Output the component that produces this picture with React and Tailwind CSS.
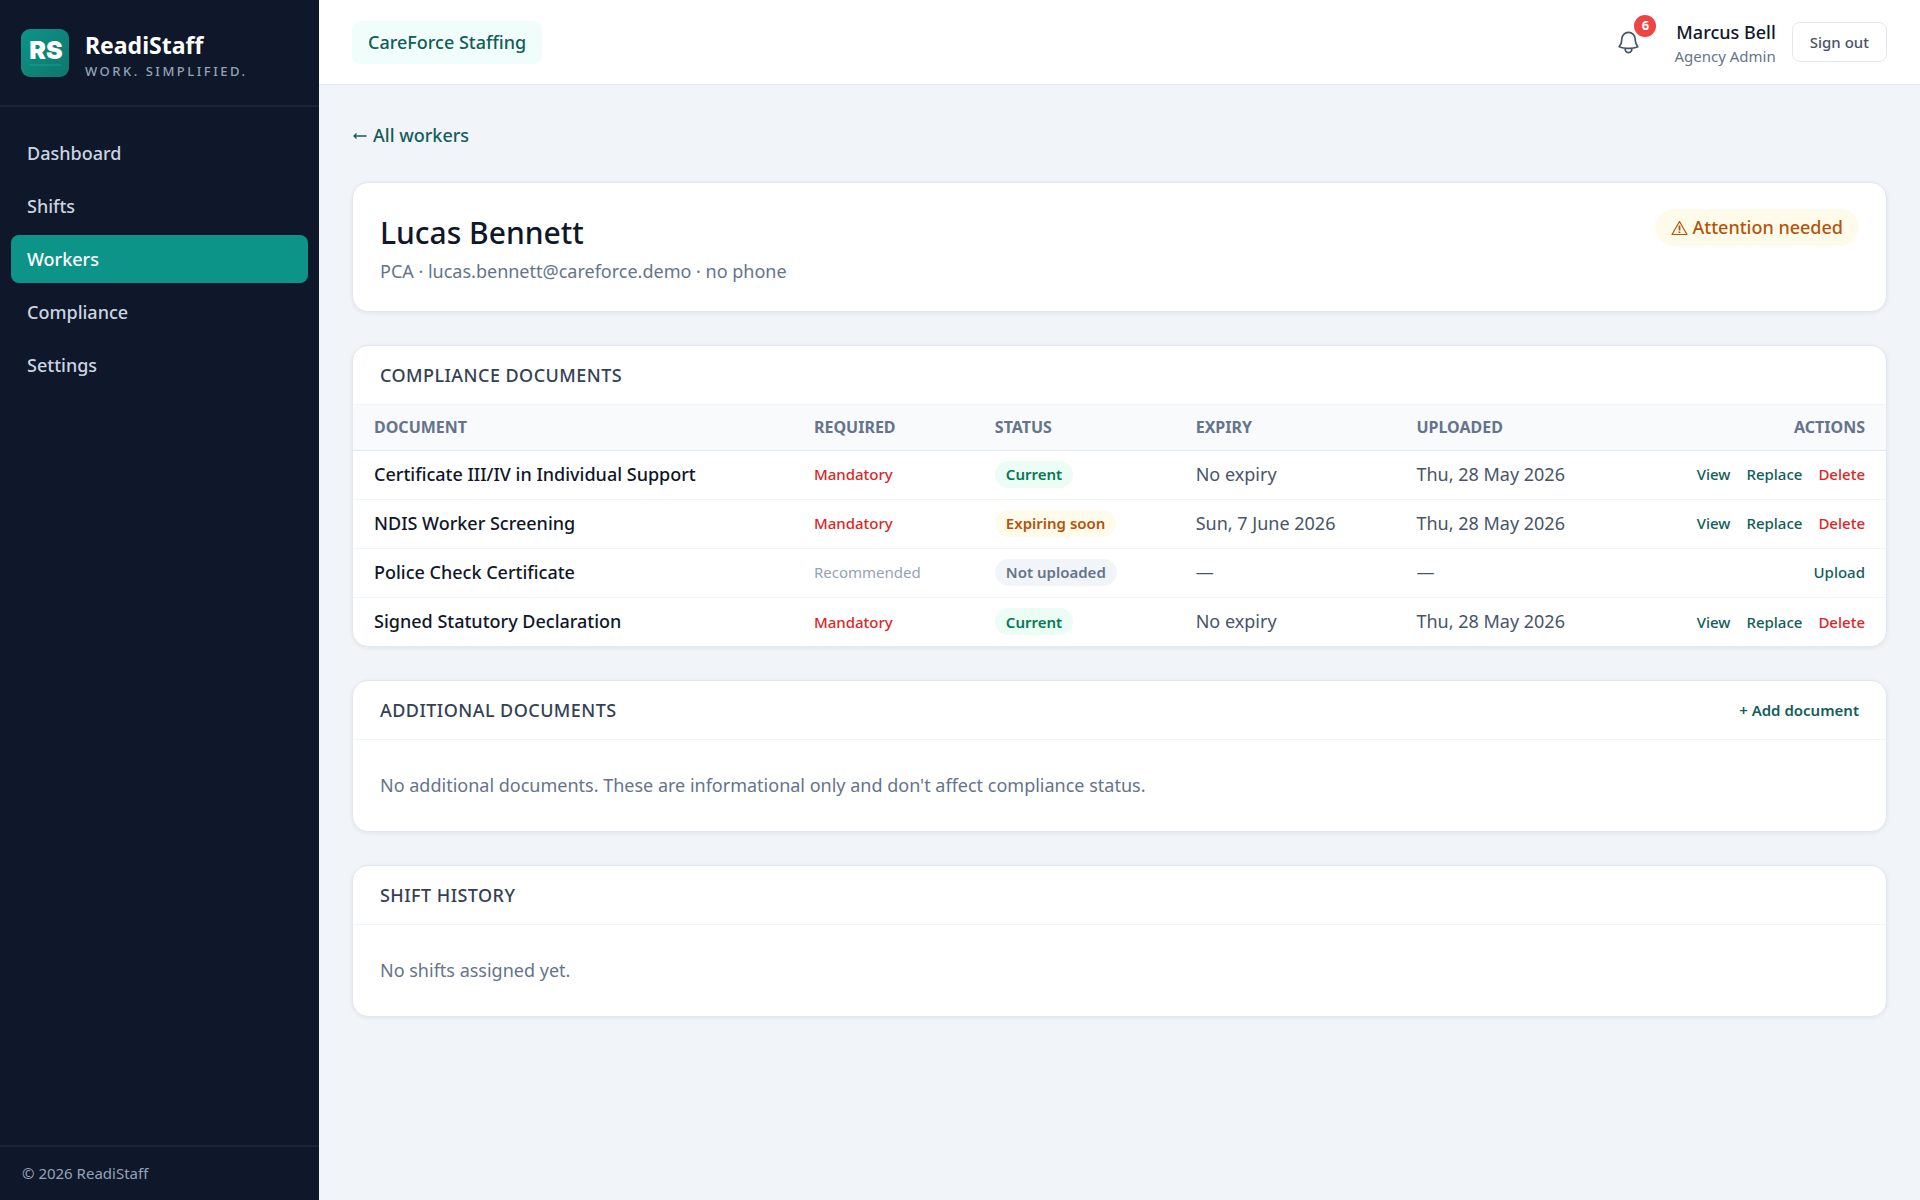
const NAV = ["Dashboard", "Shifts", "Workers", "Compliance", "Settings"];

const DOCS = [
  { name: "Certificate III/IV in Individual Support", mandatory: true, status: "Current", expiry: "No expiry", uploaded: "Thu, 28 May 2026" },
  { name: "NDIS Worker Screening", mandatory: true, status: "Expiring soon", expiry: "Sun, 7 June 2026", uploaded: "Thu, 28 May 2026" },
  { name: "Police Check Certificate", mandatory: false, status: "Not uploaded", expiry: "—", uploaded: "—" },
  { name: "Signed Statutory Declaration", mandatory: true, status: "Current", expiry: "No expiry", uploaded: "Thu, 28 May 2026" },
];

const STATUS_STYLE = {
  Current: "bg-[#ecfdf5] text-[#047857]",
  "Expiring soon": "bg-[#fffbeb] text-[#b45309]",
  "Not uploaded": "bg-[#f1f5f9] text-[#64748b]",
};

function Card({ children }) {
  return (
    <section className="overflow-hidden rounded-2xl border border-[#e2e8f0] bg-white shadow-[0_1px_4px_rgba(15,23,42,0.08)]">
      {children}
    </section>
  );
}

function CardHeader({ title, children }) {
  return (
    <div className="flex h-[59px] items-center justify-between border-b border-[#f1f5f9] px-[27px]">
      <h2 className="text-[18px] font-medium tracking-wide text-[#334155]">{title}</h2>
      {children}
    </div>
  );
}

function Logo() {
  return (
    <svg className="size-12 shrink-0" viewBox="0 0 48 48" role="img" aria-label="ReadiStaff logo">
      <defs>
        <linearGradient id="logo-fill" x1="0" y1="0" x2="1" y2="1">
          <stop offset="0" stopColor="#0d9488" />
          <stop offset="1" stopColor="#0f766e" />
        </linearGradient>
      </defs>
      <rect width="48" height="48" rx="9" fill="url(#logo-fill)" />
      <text x="25" y="30" textAnchor="middle" fontSize="25" fontWeight="900" fontFamily="Inter, sans-serif" fill="#fff">RS</text>
      <rect x="8" y="35" width="33" height="2" rx="1" fill="#14b8a6" opacity="0.3" />
    </svg>
  );
}

function Bell() {
  return (
    <svg className="size-[27px]" viewBox="0 0 24 24" fill="none" stroke="#475569" strokeWidth="1.5" strokeLinecap="round" strokeLinejoin="round" aria-hidden="true">
      <path d="M14.857 17.082a23.848 23.848 0 0 0 5.454-1.31A8.967 8.967 0 0 1 18 9.75V9A6 6 0 0 0 6 9v.75a8.967 8.967 0 0 1-2.312 6.022c1.733.64 3.56 1.085 5.455 1.31m5.714 0a24.255 24.255 0 0 1-5.714 0m5.714 0a3 3 0 1 1-5.714 0" />
    </svg>
  );
}

function ArrowLeft() {
  return (
    <svg className="h-2 w-[15px]" viewBox="0 0 15 8" fill="none" stroke="currentColor" strokeWidth="1.3" aria-hidden="true">
      <path d="M2 5H14.500M4.500 2.500 2 5l2.500 2.500" />
    </svg>
  );
}

function Warning() {
  return (
    <svg className="h-4 w-[17px]" viewBox="0 0 17 16" fill="none" stroke="#b45309" strokeWidth="1.2" strokeLinejoin="round" aria-hidden="true">
      <path d="M8.500 1.500 16 14.500H1Z" />
      <path d="M8.500 5.500v5M8.500 11.500v1.500" strokeWidth="1.800" />
    </svg>
  );
}

export default function App() {
  return (
    <div className="flex min-h-screen bg-[#f1f5f9] font-['Noto_Sans','Open_Sans',sans-serif] text-[#0f172a]">
      <aside className="flex w-[319px] shrink-0 flex-col bg-[#0f172a]">
        <div className="flex h-[107px] items-center gap-4 border-b-2 border-[#1b2436] px-[21px]">
          <Logo />
          <div className="pt-2">
            <p className="text-[23px] leading-7 font-bold text-white">ReadiStaff</p>
            <p className="text-[13px] leading-6 font-medium tracking-[2.5px] text-[#94a3b8]">WORK. SIMPLIFIED.</p>
          </div>
        </div>
        <nav className="flex flex-1 flex-col gap-[5px] px-[11px] pt-[22px]">
          {NAV.map((item) => (
            <a
              key={item}
              href="#"
              aria-current={item === "Workers" ? "page" : undefined}
              className={`flex h-12 items-center rounded-lg px-4 text-[18px] font-medium ${item === "Workers" ? "bg-[#0d9488] text-white" : "text-[#cbd5e1]"}`}
            >
              {item}
            </a>
          ))}
        </nav>
        <p className="flex h-[55px] items-center border-t-2 border-[#1b2436] px-[22px] text-[15px] text-[#94a3b8]">© 2026 ReadiStaff</p>
      </aside>

      <div className="min-w-0 flex-1">
        <header className="flex h-[85px] items-center justify-between border-b border-[#e2e8f0] bg-white px-[33px]">
          <span className="flex h-[43px] items-center rounded-lg bg-[#f0fdfa] px-4 text-[18px] font-medium text-[#115e59]">CareForce Staffing</span>
          <div className="flex items-center gap-4">
            <button type="button" aria-label="Notifications, 6 unread" className="relative mr-2 p-2">
              <Bell />
              <span className="absolute -top-1.5 -right-1.5 flex size-[22px] items-center justify-center rounded-full bg-[#ef4444] text-[13px] font-bold text-white">6</span>
            </button>
            <div className="pt-1 text-right">
              <p className="text-[18px] leading-6 font-medium">Marcus Bell</p>
              <p className="text-[15px] leading-6 text-[#64748b]">Agency Admin</p>
            </div>
            <button type="button" className="h-10 rounded-lg border border-[#e2e8f0] px-[17px] text-[15px] font-medium text-[#475569]">Sign out</button>
          </div>
        </header>

        <main className="flex flex-col gap-[33px] px-[33px] py-9">
          <a href="#" className="flex items-center gap-[6px] self-start text-[18px] leading-7 font-medium text-[#115e59]">
            <ArrowLeft />
            All workers
          </a>

          <Card>
            <div className="flex items-start justify-between px-[27px] py-[26px]">
              <div>
                <h1 className="text-[30px] leading-[48px] font-medium">Lucas Bennett</h1>
                <p className="text-[18px] leading-7 text-[#64748b]">PCA · lucas.bennett@careforce.demo · no phone</p>
              </div>
              <span className="flex h-[37px] items-center gap-1 rounded-full bg-[#fffbeb] px-4 text-[18px] font-medium text-[#b45309]">
                <Warning />
                Attention needed
              </span>
            </div>
          </Card>

          <Card>
            <CardHeader title="COMPLIANCE DOCUMENTS" />
            <table className="w-full table-fixed text-left">
              <colgroup>
                <col className="w-[28.7%]" />
                <col className="w-[11.8%]" />
                <col className="w-[13.1%]" />
                <col className="w-[14.4%]" />
                <col className="w-[12%]" />
                <col className="w-[20%]" />
              </colgroup>
              <thead className="border-b border-[#e2e8f0] bg-[#f8fafc] text-[16px] text-[#64748b]">
                <tr className="h-[45px]">
                  {["DOCUMENT", "REQUIRED", "STATUS", "EXPIRY", "UPLOADED"].map((h) => (
                    <th key={h} scope="col" className="px-[21px] font-bold">{h}</th>
                  ))}
                  <th scope="col" className="px-[21px] text-right font-bold">ACTIONS</th>
                </tr>
              </thead>
              <tbody className="divide-y divide-[#f1f5f9] text-[18px] whitespace-nowrap text-[#475569]">
                {DOCS.map((d) => (
                  <tr key={d.name} className="h-[49px]">
                    <td className="px-[21px] font-medium text-[#0f172a]">{d.name}</td>
                    <td className="px-[21px] text-[15px]">
                      {d.mandatory ? <span className="font-medium text-[#dc2626]">Mandatory</span> : <span className="text-[#94a3b8]">Recommended</span>}
                    </td>
                    <td className="px-[21px] text-[15px]">
                      <span className={`inline-flex h-[27px] items-center rounded-full px-[11px] font-semibold ${STATUS_STYLE[d.status]}`}>{d.status}</span>
                    </td>
                    <td className="px-[21px]">{d.expiry}</td>
                    <td className="px-[21px]">{d.uploaded}</td>
                    <td className="px-[21px]">
                      <div className="flex justify-end gap-4 text-[15px] font-medium text-[#115e59]">
                        {d.status === "Not uploaded" ? (
                          <button type="button">Upload</button>
                        ) : (
                          <>
                            <button type="button">View</button>
                            <button type="button">Replace</button>
                            <button type="button" className="text-[#dc2626]">Delete</button>
                          </>
                        )}
                      </div>
                    </td>
                  </tr>
                ))}
              </tbody>
            </table>
          </Card>

          <Card>
            <CardHeader title="ADDITIONAL DOCUMENTS">
              <button type="button" className="text-[15px] font-semibold text-[#115e59]">+ Add document</button>
            </CardHeader>
            <p className="px-[27px] py-8 text-[18px] leading-[27px] text-[#64748b]">
              No additional documents. These are informational only and don't affect compliance status.
            </p>
          </Card>

          <Card>
            <CardHeader title="SHIFT HISTORY" />
            <p className="px-[27px] py-8 text-[18px] leading-[27px] text-[#64748b]">No shifts assigned yet.</p>
          </Card>
        </main>
      </div>
    </div>
  );
}
